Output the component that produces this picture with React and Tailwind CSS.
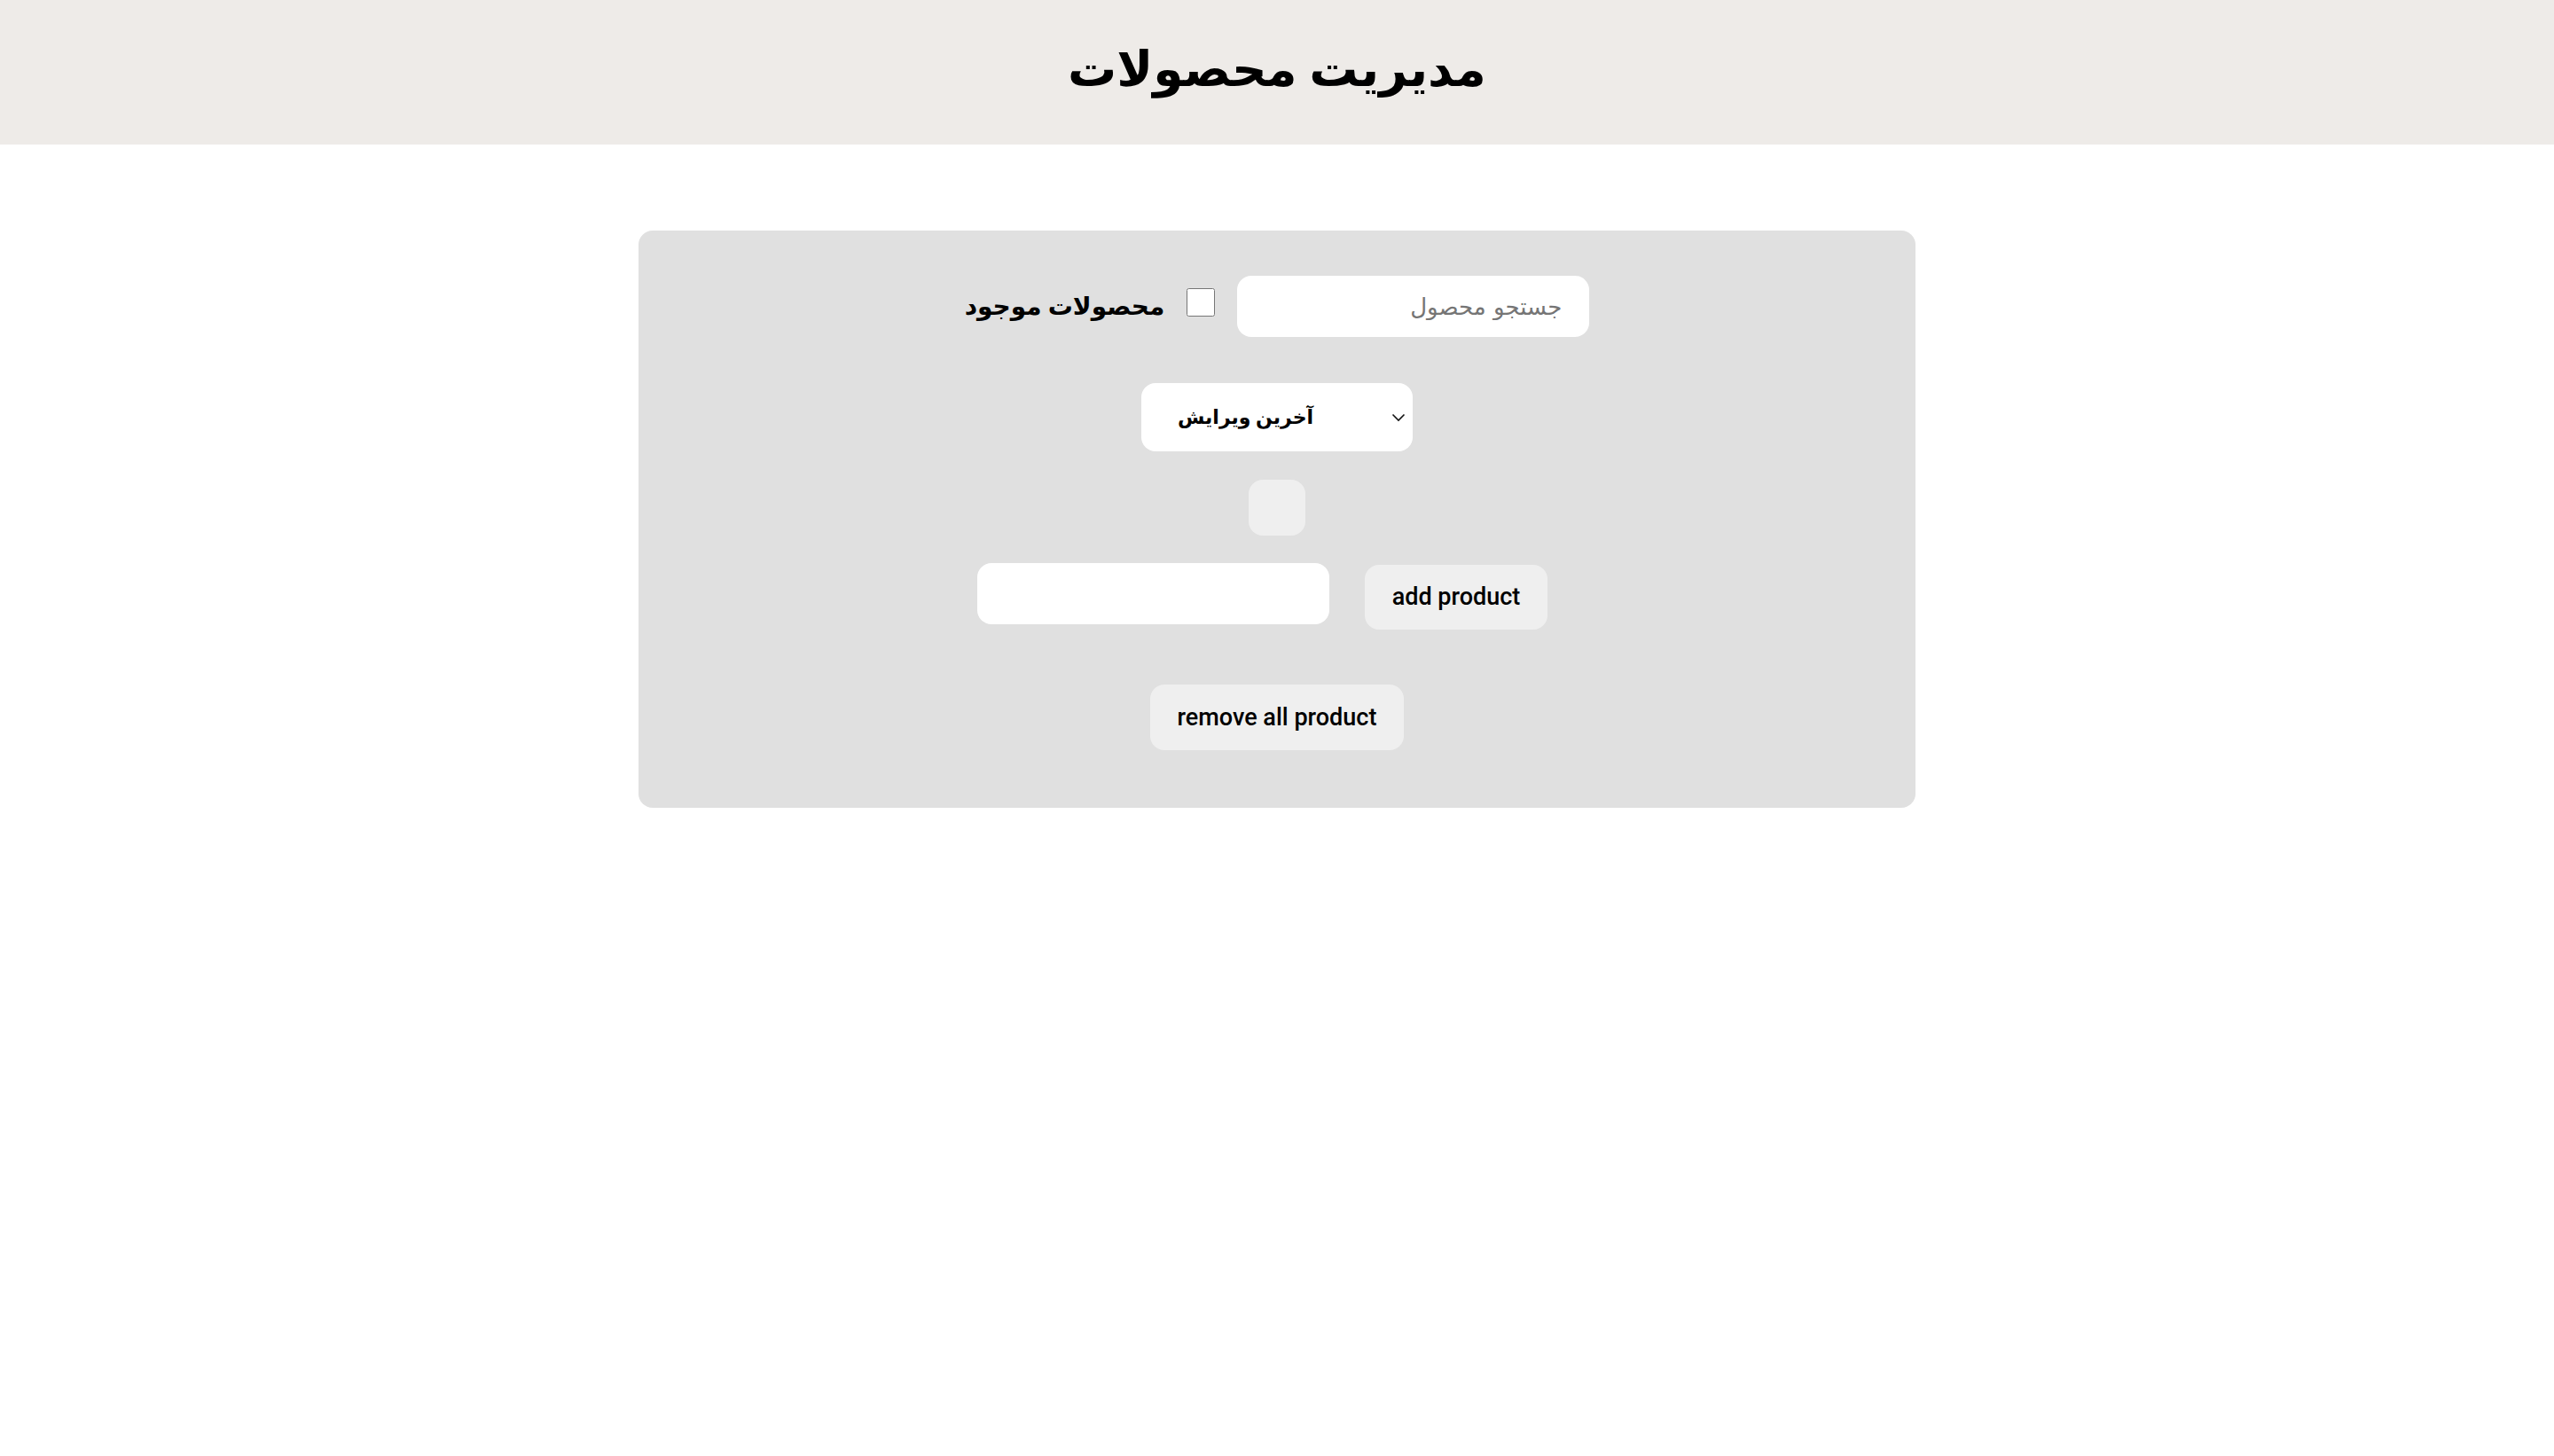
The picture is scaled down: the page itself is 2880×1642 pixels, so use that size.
import { useState } from 'react';

const ChevronDown = () => (
  <svg width="16" height="10" viewBox="0 0 16 10" fill="none" stroke="#111" strokeWidth="1.6">
    <path d="M1.5 1.5 L8 8 L14.5 1.5" />
  </svg>
);

const App = () => {
  const [search, setSearch] = useState('');
  const [inStock, setInStock] = useState(false);
  const [sort, setSort] = useState('latest');
  const [name, setName] = useState('');

  return (
    <div className="min-h-screen bg-white font-['Roboto','DejaVu_Sans',sans-serif] text-black">
      {/* Header */}
      <header className="h-[163px] bg-[#eeebe8] flex items-center justify-center">
        <h1 className="text-[55px] font-bold leading-none pb-[6px]" dir="rtl">مدیریت محصولات</h1>
      </header>

      <main className="flex justify-center pt-[97px]">
        <div className="w-[1440px] bg-[#e0e0e0] rounded-[16px] flex flex-col items-center pt-[51px] pb-[65px]">
          {/* Search row */}
          <div className="flex items-center gap-[25px]">
            <label className="text-[28px] font-bold" dir="rtl" htmlFor="stock">
              محصولات موجود
            </label>
            <input
              id="stock"
              type="checkbox"
              checked={inStock}
              onChange={(e) => setInStock(e.target.checked)}
              className="w-[32px] h-[32px] m-0 mb-[10px]"
            />
            <input
              type="text"
              dir="rtl"
              value={search}
              onChange={(e) => setSearch(e.target.value)}
              placeholder="جستجو محصول"
              className="w-[397px] h-[69px] bg-white rounded-[16px] px-[31px] text-[26px] font-['DejaVu_Sans',sans-serif] placeholder:text-[#757575] outline-none"
            />
          </div>

          {/* Sort */}
          <div className="relative mt-[52px]">
            <select
              value={sort}
              onChange={(e) => setSort(e.target.value)}
              className="appearance-none w-[306px] h-[77px] bg-white rounded-[16px] pl-[41px] pr-[40px] text-[22px] font-bold outline-none"
            >
              <option value="latest">آخرین ویرایش</option>
              <option value="oldest">قدیمی‌ترین</option>
            </select>
            <span className="absolute right-[8px] top-1/2 -translate-y-1/2 pointer-events-none">
              <ChevronDown />
            </span>
          </div>

          {/* Empty button */}
          <button className="mt-[32px] w-[64px] h-[63px] bg-[#efefef] rounded-[16px]" />

          {/* Add row */}
          <div className="flex items-start gap-[40px] mt-[31px] pr-[33px]">
            <input
              type="text"
              value={name}
              onChange={(e) => setName(e.target.value)}
              className="w-[397px] h-[69px] bg-white rounded-[16px] px-[20px] text-[28px] outline-none"
            />
            <button className="mt-[2px] w-[206px] h-[73px] bg-[#efefef] rounded-[16px] text-[27px] font-medium">
              add product
            </button>
          </div>

          {/* Remove all */}
          <button className="mt-[62px] w-[286px] h-[74px] bg-[#efefef] rounded-[16px] text-[27px] font-medium">
            remove all product
          </button>
        </div>
      </main>
    </div>
  );
};

export default App;
